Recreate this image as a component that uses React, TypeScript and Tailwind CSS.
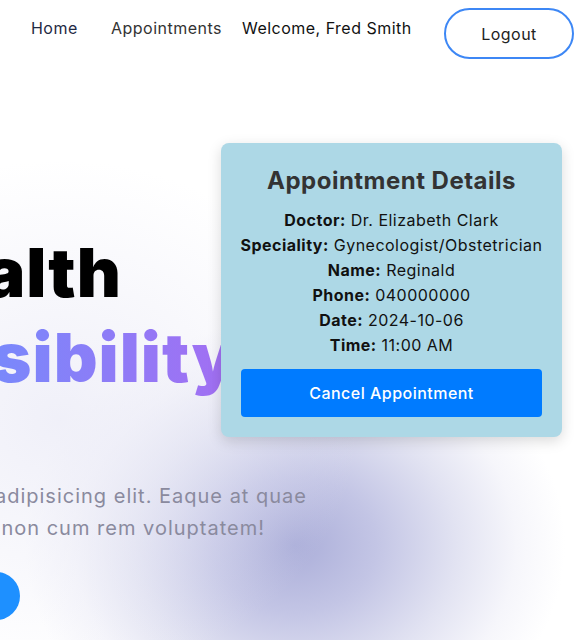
import React from "react";

type Detail = {
  label: string;
  value: string;
};

const details: Detail[] = [
  { label: "Doctor:", value: "Dr. Elizabeth Clark" },
  { label: "Speciality:", value: "Gynecologist/Obstetrician" },
  { label: "Name:", value: "Reginald" },
  { label: "Phone:", value: "040000000" },
  { label: "Date:", value: "2024-10-06" },
  { label: "Time:", value: "11:00 AM" },
];

const Navbar = () => {
  return (
    <nav className="flex items-start h-[67px] pl-[31px] tracking-[0.03em]">
      <a className="w-[47px] mt-[17px] text-[16px] leading-[22px] text-[#1f2a44] whitespace-nowrap">
        Home
      </a>
      <a className="w-[114px] mt-[17px] ml-[33px] text-[16px] leading-[22px] text-[#333] whitespace-nowrap">
        Appointments
      </a>
      <span className="w-[169px] mt-[17px] ml-[17px] text-[16px] leading-[22px] text-[#111] whitespace-nowrap">
        Welcome, Fred Smith
      </span>
      <button className="mt-[8px] ml-[33px] w-[130px] h-[51px] shrink-0 rounded-full border-2 border-[#3d87f5] bg-white text-[16px] text-[#222]">
        Logout
      </button>
    </nav>
  );
};

const AppointmentCard = () => {
  return (
    <div className="absolute left-[221px] top-[143px] w-[341px] rounded-lg bg-[#add8e6] p-5 tracking-[0.03em] shadow-[0_4px_14px_rgba(0,0,0,0.15)]">
      <h2 className="text-center text-[24px] leading-[36px] font-bold text-[#333]">
        Appointment Details
      </h2>
      <div className="mt-[9px] flex flex-col items-center">
        {details.map((d, i) => (
          <p key={i} className="text-[16px] leading-[25px] text-[#111] whitespace-nowrap">
            <strong className="font-bold">{d.label}</strong> {d.value}
          </p>
        ))}
      </div>
      <button className="mt-[11px] w-full h-12 rounded bg-[#007bff] text-white text-[16px] font-medium">
        Cancel Appointment
      </button>
    </div>
  );
};

const Hero = () => {
  return (
    <section className="relative flex flex-col pt-[163px]">
      <div className="flex justify-end w-[122px] whitespace-nowrap">
        <h1 className="text-[68px] leading-[85px] font-black text-black tracking-[1px]">
          Your Health
        </h1>
      </div>
      <div className="flex justify-end w-[236px] whitespace-nowrap">
        <h1 className="text-[68px] leading-[85px] font-black tracking-[1px] bg-[linear-gradient(90deg,#6f86ff_0%,#7a88fb_calc(100%_-_236px),#a46ef2_100%)] bg-clip-text text-transparent">
          Our Responsibility
        </h1>
      </div>
      <div className="mt-[80px] flex flex-col text-[20px] leading-[32px] text-[#8a8a9e] tracking-[0.05em]">
        <div className="flex justify-end w-[307px] whitespace-nowrap">
          <span>Lorem ipsum dolor sit amet consectetur adipisicing elit. Eaque at quae</span>
        </div>
        <div className="flex justify-end w-[265px] whitespace-nowrap">
          <span>ducimus suscipit omnis quibusdam non cum rem voluptatem!</span>
        </div>
      </div>
      <div className="mt-[28px] flex justify-end w-[20px]">
        <button className="shrink-0 w-[170px] h-[48px] rounded-full bg-[#1e90ff] text-white">
          Get Started
        </button>
      </div>
    </section>
  );
};

export default function App() {
  return (
    <div
      className="relative w-[574px] h-[640px] overflow-hidden bg-white"
      style={{ fontFamily: "Inter, 'Open Sans', sans-serif" }}
    >
      <div className="absolute inset-0 bg-[radial-gradient(ellipse_270px_225px_at_295px_545px,#abaed9_0%,#c3c5e5_30%,#e2e3f2_60%,#f6f6fb_82%,#ffffff_100%)]" />
      <div className="absolute inset-0 bg-[radial-gradient(ellipse_300px_260px_at_60px_420px,rgba(236,236,247,0.8)_0%,rgba(255,255,255,0)_100%)]" />
      <div className="relative">
        <Navbar />
        <Hero />
      </div>
      <AppointmentCard />
    </div>
  );
}
